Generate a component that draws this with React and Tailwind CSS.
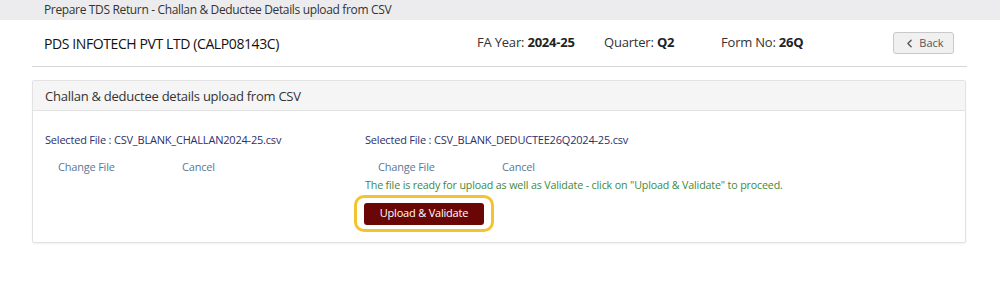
import React from 'react';
import { ChevronLeft } from 'lucide-react';

const font = { fontFamily: '"Open Sans", "Noto Sans", sans-serif' };

const FileColumn = ({ fileName, children }) => (
  <div className="flex flex-col">
    <div className="text-[11px] leading-[16px] text-[#2c2f6e] tracking-[-0.2px]">Selected File : {fileName}</div>
    <div className="flex mt-[11px] pl-[13px] text-[11px] leading-[16px] text-[#5b7895] tracking-[-0.2px]">
      <span className="w-[124px]">Change File</span>
      <span>Cancel</span>
    </div>
    {children}
  </div>
);

const App = () => {
  return (
    <div className="w-[1000px] h-[288px] bg-white text-[#222]" style={font}>
      <div className="h-[20px] bg-[#ececee] pl-[44px] text-[12px] leading-[20px] text-[#333] tracking-[-0.35px]">
        Prepare TDS Return - Challan &amp; Deductee Details upload from CSV
      </div>

      <div className="mx-[32px] w-[935px] h-[47px] flex items-center border-b border-[#d6d6d6]">
        <div className="w-[445px] pl-[12px] text-[14px] text-[#111] tracking-[-0.4px]">PDS INFOTECH PVT LTD (CALP08143C)</div>
        <div className="w-[127px] text-[13px] text-[#333] tracking-[-0.2px]">FA Year: <b className="text-[#222]">2024-25</b></div>
        <div className="w-[117px] text-[13px] text-[#333] tracking-[-0.2px]">Quarter: <b className="text-[#222]">Q2</b></div>
        <div className="flex-1 text-[13px] text-[#333] tracking-[-0.2px]">Form No: <b className="text-[#222]">26Q</b></div>
        <button className="mr-[13px] w-[61px] h-[22px] flex items-center justify-center gap-[3px] bg-[#f0f0f0] border border-[#c8c8c8] rounded-[3px] text-[11px] text-[#555]">
          <ChevronLeft className="w-[13px] h-[13px]" strokeWidth={2.5} />
          <span>Back</span>
        </button>
      </div>

      <div className="mx-[32px] mt-[13px] w-[934px] border border-[#e2e2e2] rounded-[2px] shadow-[0_1px_2px_rgba(0,0,0,0.06)]">
        <div className="h-[30px] bg-[#f5f5f5] border-b border-[#e2e2e2] pl-[12px] text-[13px] leading-[30px] text-[#333] tracking-[-0.25px]">
          Challan &amp; deductee details upload from CSV
        </div>
        <div className="flex pl-[12px] pt-[21px] pb-[10px]">
          <div className="w-[320px]">
            <FileColumn fileName="CSV_BLANK_CHALLAN2024-25.csv" />
          </div>
          <div>
            <FileColumn fileName="CSV_BLANK_DEDUCTEE26Q2024-25.csv">
              <div className="mt-[3px] text-[10.7px] leading-[14px] text-[#3d8a3d] tracking-[-0.15px]">
                The file is ready for upload as well as Validate - click on "Upload &amp; Validate" to proceed.
              </div>
              <div className="mt-[3px] -ml-[11px] w-[140px] h-[37px] rounded-[10px] border-[3px] border-[#f4c430] flex items-center justify-center">
                <button className="w-[120px] h-[22px] bg-[#6b0606] rounded-[3px] text-white text-[11px] tracking-[-0.2px]">
                  Upload &amp; Validate
                </button>
              </div>
            </FileColumn>
          </div>
        </div>
      </div>
    </div>
  );
};

export default App;
